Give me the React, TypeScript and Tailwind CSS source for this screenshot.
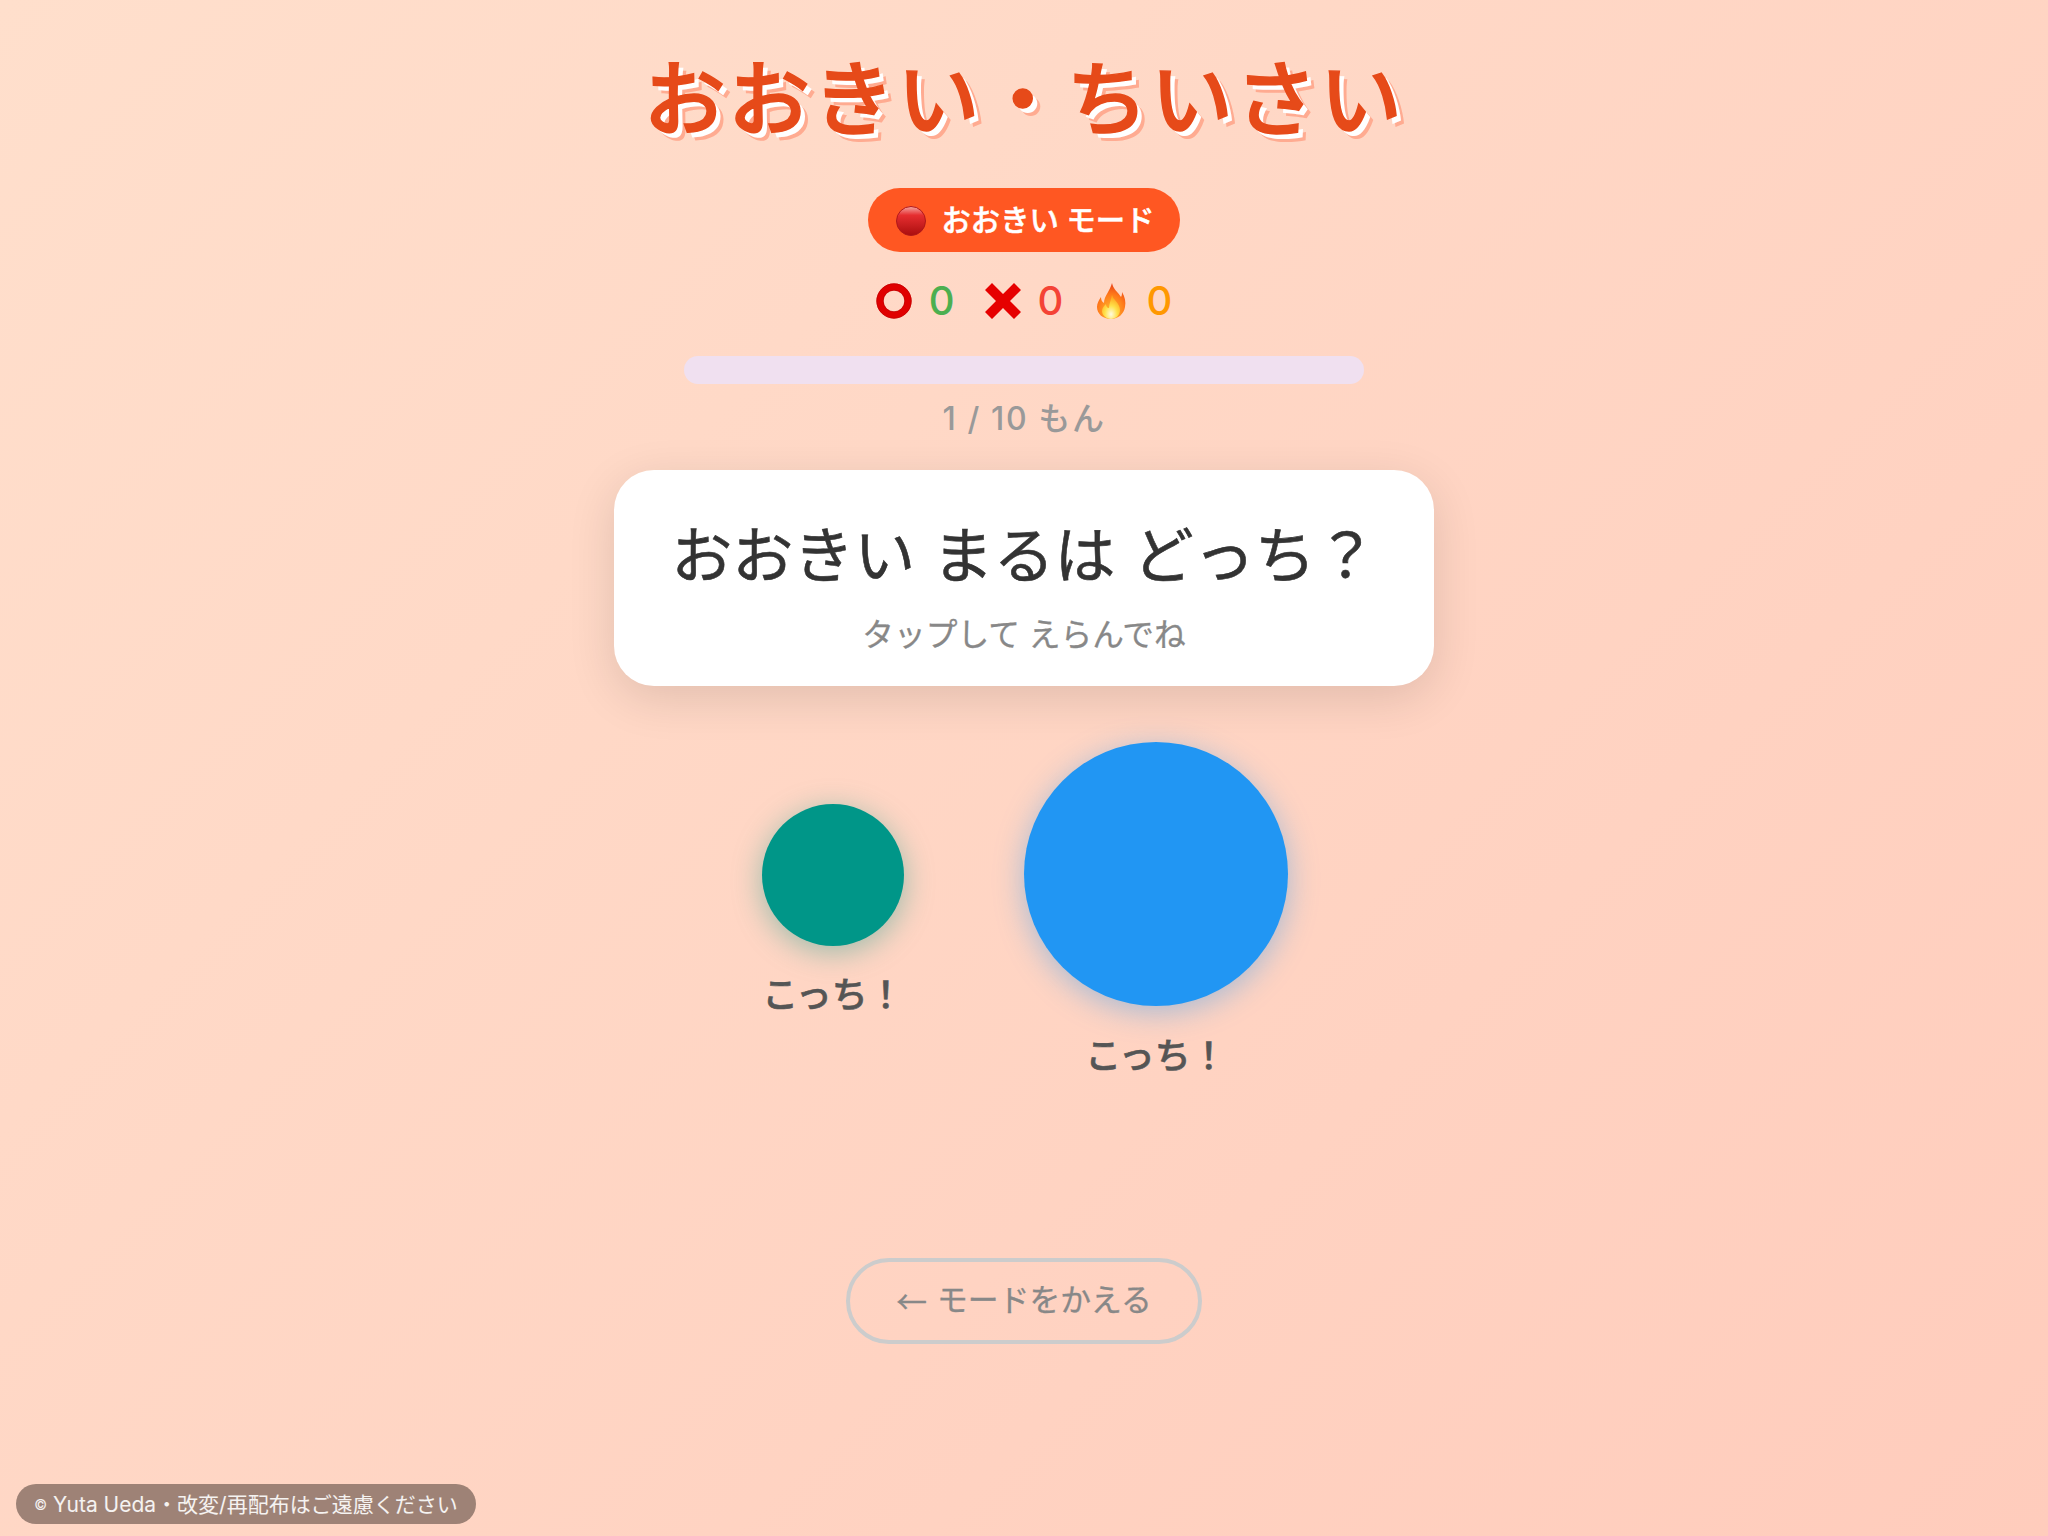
import React from "react";

function RedDot() {
  return (
    <svg width="30" height="30" viewBox="0 0 30 30" className="mt-[2px] shrink-0">
      <defs>
        <linearGradient id="rd" x1="0" y1="0" x2="0" y2="1">
          <stop offset="0" stopColor="#f4a8a4" />
          <stop offset="0.3" stopColor="#e62e30" />
          <stop offset="1" stopColor="#aa0e0e" />
        </linearGradient>
      </defs>
      <circle cx="15" cy="15" r="14.5" fill="url(#rd)" stroke="#b0181a" strokeWidth="1" />
    </svg>
  );
}

function Ring() {
  return (
    <svg width="36" height="36" viewBox="0 0 36 36" className="shrink-0">
      <circle cx="18" cy="18" r="14" fill="none" stroke="#e00000" strokeWidth="7" />
      <circle cx="18" cy="18" r="17.2" fill="none" stroke="#c40000" strokeWidth="0.8" />
      <circle cx="18" cy="18" r="10.8" fill="none" stroke="#b80000" strokeWidth="0.6" />
    </svg>
  );
}

function Cross() {
  return (
    <svg width="36" height="36" viewBox="0 0 36 36" className="shrink-0">
      <path d="M7 0 L18 11 L29 0 L36 7 L25 18 L36 29 L29 36 L18 25 L7 36 L0 29 L11 18 L0 7 Z" fill="#e60000" />
    </svg>
  );
}

function Fire() {
  return (
    <svg width="36" height="36" viewBox="-3 0 36 36" className="shrink-0">
      <defs>
        <radialGradient id="fo" cx="0.5" cy="0.8" r="0.8">
          <stop offset="0" stopColor="#ffc030" />
          <stop offset="0.6" stopColor="#ff7a1a" />
          <stop offset="1" stopColor="#e8401a" />
        </radialGradient>
        <radialGradient id="fi" cx="0.5" cy="0.8" r="0.7">
          <stop offset="0" stopColor="#fffbe0" />
          <stop offset="0.5" stopColor="#ffe14a" />
          <stop offset="1" stopColor="#ffa820" />
        </radialGradient>
      </defs>
      <path d="M16 0 C17 6 22 9 25 14 C26 12 26 11 26 9 C29 14 30 19 29 24 C28 31 22 36 15 36 C7 36 1 31 1 24 C1 20 3 17 5 14 C5 17 6 19 8 20 C8 13 14 8 16 0 Z" fill="url(#fo)" />
      <path d="M16 12 C17 17 24 20 24 27 C24 32 20 36 15 36 C10 36 6 32 6 28 C6 25 8 23 10 21 C10 23 11 25 13 25 C13 21 15 17 16 12 Z" fill="url(#fi)" />
    </svg>
  );
}

function Score({ icon, value, color }: { icon: React.ReactNode; value: number; color: string }) {
  return (
    <div className="flex items-center gap-[17px]">
      {icon}
      <span className={`text-[40px] leading-[40px] font-medium ${color}`}>{value}</span>
    </div>
  );
}

function Choice({ pad, gap, size, color, shadow }: { pad: string; gap: string; size: string; color: string; shadow: string }) {
  return (
    <div className={`flex flex-col items-center ${pad}`}>
      <div className={`${size} ${color} ${shadow} rounded-full`} />
      <div className={`${gap} text-[36px] leading-[44px] font-medium text-[#555555] [-webkit-text-stroke:0.6px_#555555]`}>こっち！</div>
    </div>
  );
}

export default function App() {
  return (
    <div className="relative flex h-[1536px] flex-col items-center overflow-hidden bg-[linear-gradient(135deg,#ffdfcc,#ffccbc)] font-['Inter','Noto_Sans_CJK_JP',sans-serif]">
      <h1 className="mt-[52px] text-[82px] leading-[96px] font-medium tracking-[2.5px] text-[#e64a19] [-webkit-text-stroke:1.5px_#e64a19] [text-shadow:5px_5px_0_#ffffff,8px_8px_0_#ffab91]">
        おおきい・ちいさい
      </h1>

      <div className="mt-[40px] flex h-[64px] w-[312px] items-center justify-center gap-[16px] rounded-full bg-[#ff5722] pl-[2px] text-[29.3px] leading-[38px] font-medium text-white [-webkit-text-stroke:0.5px_#ffffff]">
        <RedDot />
        <span className="pt-[2px]">おおきい モード</span>
      </div>

      <div className="mt-[31px] flex h-[36px] items-center gap-[30px]">
        <Score icon={<Ring />} value={0} color="text-[#4caf50]" />
        <Score icon={<Cross />} value={0} color="text-[#f44336]" />
        <Score icon={<Fire />} value={0} color="text-[#ff9800]" />
      </div>

      <div className="mt-[37px] h-[28px] w-[680px] rounded-[14px] bg-[#f0e0f0]" />

      <div className="mt-[12px] text-[32px] leading-[46px] font-medium tracking-[1.6px] text-[#999999]">1 / 10 もん</div>

      <div className="mt-[28px] flex h-[216px] w-[820px] flex-col items-center rounded-[40px] bg-white pt-[43px] shadow-[0_12px_48px_rgba(0,0,0,0.12)]">
        <div className="text-[61px] leading-[86px] text-[#333333] [-webkit-text-stroke:0.6px_#333333]">おおきい まるは どっち？</div>
        <div className="mt-[13px] text-[31.7px] leading-[46px] text-[#888888] [-webkit-text-stroke:0.3px_#888888]">タップして えらんでね</div>
      </div>

      <div className="mt-[56px] ml-[2px] flex items-center gap-[120px]">
        <Choice pad="pt-[1px]" gap="mt-[27px]" size="h-[142px] w-[142px]" color="bg-[#009688]" shadow="shadow-[0_6px_30px_rgba(0,150,136,0.4)]" />
        <Choice pad="pt-0" gap="mt-[28px]" size="h-[264px] w-[264px]" color="bg-[#2196f3]" shadow="shadow-[0_6px_30px_rgba(33,150,243,0.4)]" />
      </div>

      <div className="mt-[180px] flex h-[86px] w-[356px] items-center justify-center gap-[10px] rounded-full border-4 border-[#cccccc] pb-[2px] text-[30.8px] leading-[46px] text-[#888888] [-webkit-text-stroke:0.3px_#888888]">
        <span className="font-['Noto_Sans_CJK_JP',sans-serif]">←</span>
        <span>モードをかえる</span>
      </div>

      <div className="absolute bottom-[12px] left-[16px] flex h-[40px] w-[460px] items-center justify-center gap-[6px] rounded-full bg-[#9e8276] pt-[2px] text-[21px] leading-[30px] text-white/90">
        <span className="text-[14px]">©</span>
        <span>Yuta Ueda・改変/再配布はご遠慮ください</span>
      </div>
    </div>
  );
}
